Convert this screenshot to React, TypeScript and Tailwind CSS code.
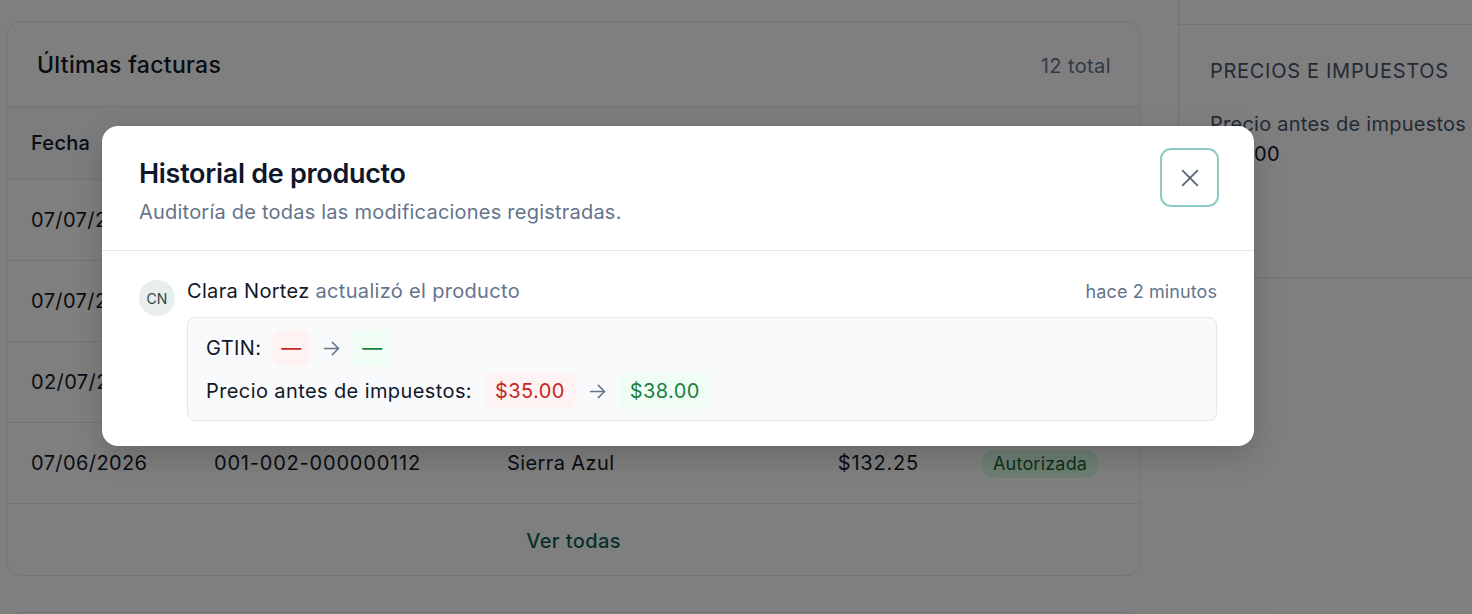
import React from "react";

const rows = [
  { fecha: "07/07/2026", num: "001-002-000000118", cliente: "Comercial Andina", total: "$245.80" },
  { fecha: "07/07/2026", num: "001-002-000000117", cliente: "Ferretería Luz", total: "$89.40" },
  { fecha: "02/07/2026", num: "001-002-000000115", cliente: "Distribuidora Mar", total: "$412.00" },
  { fecha: "07/06/2026", num: "001-002-000000112", cliente: "Sierra Azul", total: "$132.25" },
];

function Arrow() {
  return (
    <svg width="21" height="21" viewBox="0 0 24 24" fill="none" stroke="#64748b" strokeWidth="1.7" strokeLinecap="round" strokeLinejoin="round">
      <path d="M4 12h16" />
      <path d="M13 5l7 7-7 7" />
    </svg>
  );
}

export default function App() {
  return (
    <div className="relative w-[1472px] h-[614px] overflow-hidden bg-white text-[#111827] [font-family:Inter,'Noto_Sans',sans-serif]">
      {/* Underlying page */}
      <div className="flex">
        <div className="ml-[6px] mt-[21px] w-[1135px] shrink-0">
          <div className="h-[555px] rounded-2xl border border-[#e2e8f0] bg-white flex flex-col">
            <div className="h-[85px] flex items-center justify-between pl-[30px] pr-[29px] pt-[3px] border-b border-[#e2e8f0]">
              <span className="text-[23px] tracking-[0.3px] font-medium">Últimas facturas</span>
              <span className="text-[20px] tracking-[0.4px] text-[#64748b]">12 total</span>
            </div>
            <div className="h-[73px] grid grid-cols-[183px_293px_233px_179px_1fr] items-center pl-[24px] border-b border-[#e2e8f0] text-[20px] tracking-[0.3px] font-medium bg-[#f8fafc]">
              <span>Fecha</span>
              <span>Número</span>
              <span>Cliente</span>
              <span className="text-right">Total</span>
              <span className="pl-[62px]">Estado</span>
            </div>
            {rows.map((r, i) => (
              <div key={i} className="h-[81px] grid grid-cols-[183px_293px_233px_179px_1fr] items-center pl-[24px] text-[20px] tracking-[0.4px] border-b border-[#e2e8f0]">
                <span>{r.fecha}</span>
                <span className="tracking-[0.8px]">{r.num}</span>
                <span>{r.cliente}</span>
                <span className="text-right tracking-[0.8px]">{r.total}</span>
                <span className="pl-[62px]">
                  <span className="inline-flex h-[28px] items-center rounded-full bg-[#dcfce7] px-[12px] text-[18px] tracking-[0.2px] text-[#166534]">Autorizada</span>
                </span>
              </div>
            ))}
            <div className="flex-1 flex items-center justify-center pt-[2px] text-[20px] tracking-[0.4px] font-medium text-[#0f5f56]">Ver todas</div>
          </div>
          <div className="mt-[36px] h-[40px] rounded-t-2xl border border-[#e2e8f0]"></div>
        </div>
        <div className="ml-[37px] flex-1">
          <div className="h-[25px] border-l border-b border-[#e2e8f0]"></div>
          <div className="h-[253px] border-l border-b border-[#e2e8f0] pl-[31px] pt-[32px]">
            <div className="text-[20px] leading-[28px] uppercase tracking-[0.7px] text-[#475569]">Precios e impuestos</div>
            <div className="mt-[26px] text-[20px] leading-[26px] tracking-[0.25px] text-[#475569]">Precio antes de impuestos</div>
            <div className="mt-[4px] text-[20px] leading-[26px] tracking-[0.4px] text-[#111827]">$38.00</div>
          </div>
        </div>
      </div>

      {/* Overlay */}
      <div className="absolute inset-0 bg-black/50"></div>

      {/* Modal */}
      <div className="absolute left-[102px] top-[126px] w-[1152px] rounded-2xl bg-white shadow-[0_10px_30px_rgba(0,0,0,0.18)]">
        <div className="relative pl-[37px] pr-[37px] pt-[31px] pb-[24px] border-b border-[#e2e8f0]">
          <div className="text-[27px] leading-[34px] tracking-[-0.3px] font-semibold text-[#0f172a]">Historial de producto</div>
          <div className="mt-[7px] text-[20px] leading-[28px] tracking-[0.22px] text-[#64748b]">Auditoría de todas las modificaciones registradas.</div>
          <button className="absolute right-[35px] top-[22px] w-[59px] h-[59px] rounded-[11px] border-2 border-[#8fc9c5] flex items-center justify-center bg-white">
            <svg width="32" height="32" viewBox="0 0 24 24" fill="none" stroke="#5b6478" strokeWidth="1.4" strokeLinecap="round">
              <path d="M17.5 6.5L6.5 17.5" />
              <path d="M6.5 6.5l11 11" />
            </svg>
          </button>
        </div>
        <div className="pl-[37px] pr-[37px] pt-[27px] pb-[25px]">
          <div className="flex gap-[12px]">
            <div className="w-[36px] h-[36px] mt-[2px] shrink-0 rounded-full bg-[#e8eded] flex items-center justify-center text-[14px] text-[#334545]">CN</div>
            <div className="flex-1">
              <div className="flex items-center justify-between h-[26px]">
                <div className="text-[20px] leading-[26px] tracking-[0.32px]">
                  <span className="text-[#111827]">Clara Nortez</span>{" "}
                  <span className="text-[#64748b]">actualizó el producto</span>
                </div>
                <span className="text-[18px] tracking-[0.1px] text-[#64748b]">hace 2 minutos</span>
              </div>
              <div className="mt-[13px] rounded-lg border border-[#e2e8f0] bg-[#f8fafc] pl-[18px] pr-[18px] pt-[12px] pb-[11px] flex flex-col gap-[7px]">
                <div className="flex items-center h-[36px] text-[20px] tracking-[0.4px]">
                  <span className="text-[#111827]">GTIN:</span>
                  <span className="ml-[12px] h-[36px] w-[36px] rounded-md bg-[#fef2f2] text-[#c62828] flex items-center justify-center">—</span>
                  <span className="mx-[12px] flex items-center"><Arrow /></span>
                  <span className="h-[36px] w-[36px] rounded-md bg-[#f0fdf4] text-[#1a8040] flex items-center justify-center">—</span>
                </div>
                <div className="flex items-center h-[36px] text-[20px] tracking-[0.4px]">
                  <span className="text-[#111827]">Precio antes de impuestos:</span>
                  <span className="ml-[13px] h-[36px] px-[10px] rounded-md bg-[#fef2f2] text-[#c62828] flex items-center">$35.00</span>
                  <span className="mx-[12px] flex items-center"><Arrow /></span>
                  <span className="h-[36px] px-[10px] rounded-md bg-[#f0fdf4] text-[#1a8040] flex items-center">$38.00</span>
                </div>
              </div>
            </div>
          </div>
        </div>
      </div>
    </div>
  );
}
